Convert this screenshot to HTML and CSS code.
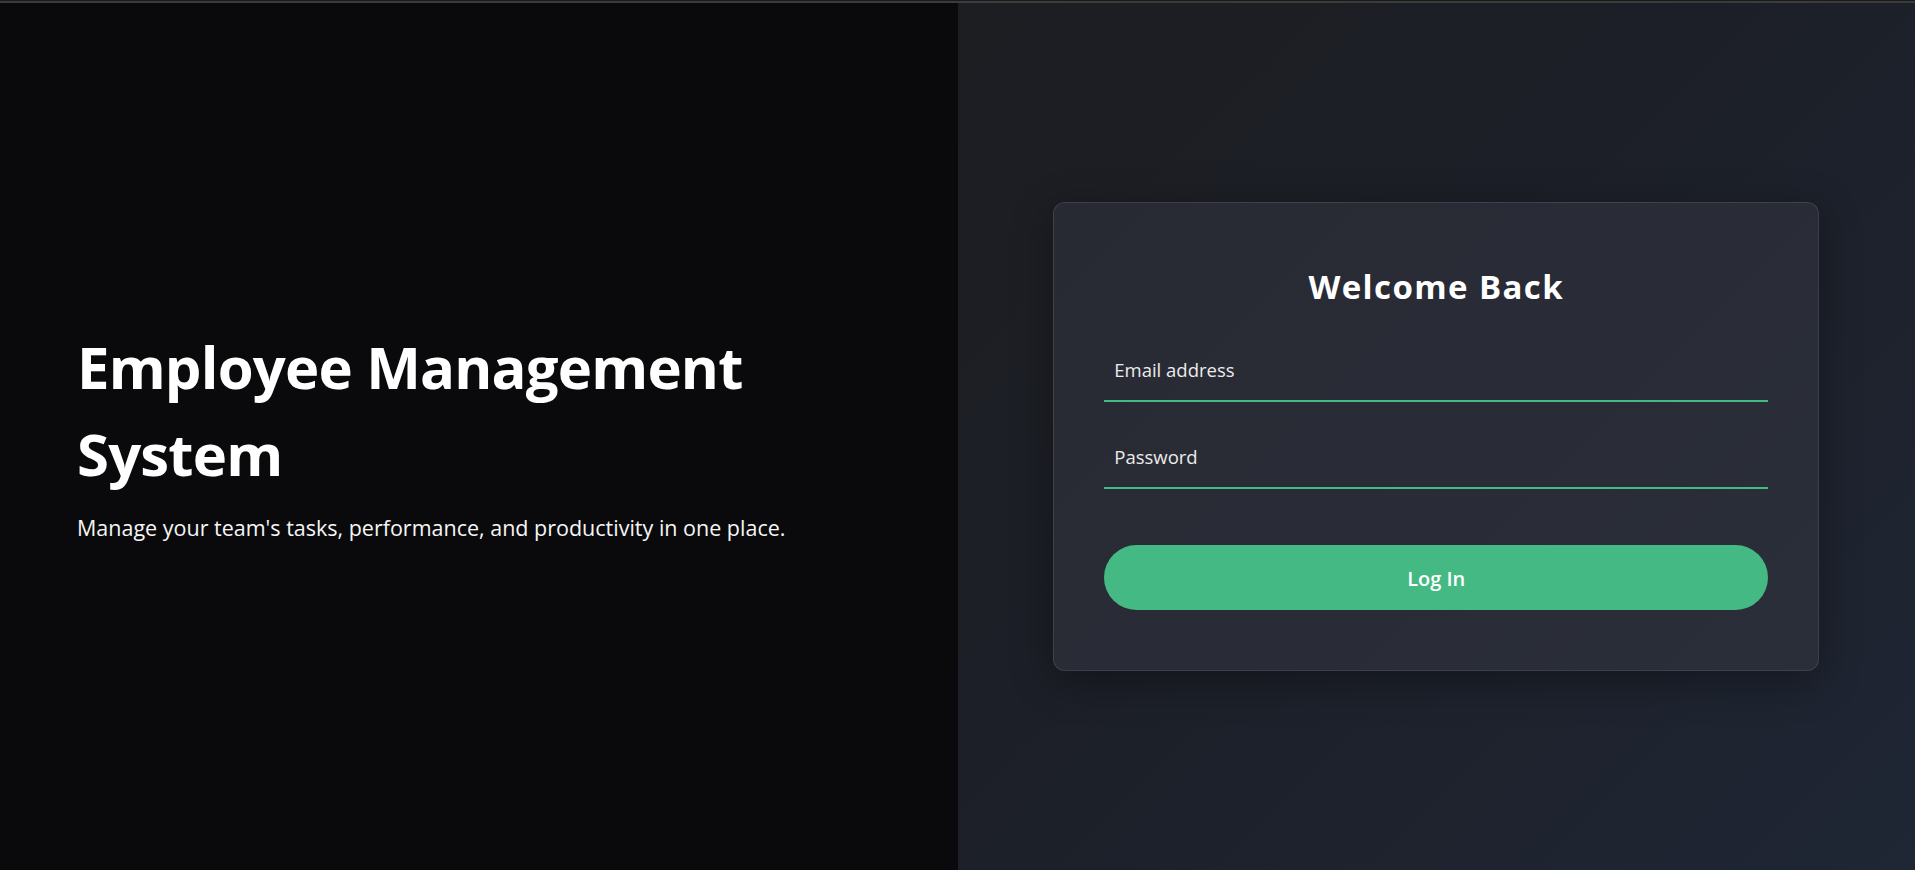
FILE: index.html
```html
<!DOCTYPE html>
<html lang="en">
<head>
<meta charset="utf-8">
<title>Employee Management System</title>
<link rel="stylesheet" href="styles.css">
</head>
<body>
<div class="page">
  <section class="intro">
    <h1 class="intro-title">Employee Management System</h1>
    <p class="intro-text">Manage your team's tasks, performance, and productivity in one place.</p>
  </section>
  <section class="auth">
    <form class="card">
      <h2 class="card-title">Welcome Back</h2>
      <input class="field field-first" type="email" placeholder="Email address">
      <input class="field" type="password" placeholder="Password">
      <button class="btn" type="button">Log In</button>
    </form>
  </section>
</div>
</body>
</html>
```

FILE: styles.css
```css
* { box-sizing: border-box; }
html, body { height: 100%; }
body {
  margin: 0;
  font-family: "Open Sans", "Noto Sans", sans-serif;
  color: #fff;
  background: #0a0a0c;
  border-top: 1px solid #1a1a1a;
  overflow: hidden;
}
.page {
  height: 100%;
  display: flex;
  border-top: 2px solid #3b3b3c;
}
.intro {
  flex: 1 1 50%;
  background: #0a0a0c;
  display: flex;
  flex-direction: column;
  justify-content: center;
  padding: 0 77px 5px;
}
.intro-title {
  margin: 0;
  font-size: 58px;
  line-height: 86.7px;
  font-weight: 700;
  letter-spacing: -0.8px;
  max-width: 720px;
}
.intro-text {
  margin: 15px 0 0;
  font-size: 21.5px;
  line-height: 31.5px;
  color: #f6f6f6;
}
.auth {
  flex: 1 1 50%;
  background: linear-gradient(135deg, #1d1e22 0%, #1c1f27 40%, #1f2634 100%);
  display: flex;
  align-items: center;
  justify-content: center;
}
.card {
  width: 80%;
  padding: 60px 50px;
  border: 1px solid rgba(255,255,255,0.1);
  border-radius: 12px;
  background: linear-gradient(135deg, #282a33 0%, #2a2e39 100%);
  box-shadow: 0 10px 40px rgba(0,0,0,0.35);
  display: flex;
  flex-direction: column;
}
.card-title {
  margin: 0 0 32px;
  padding-top: 3px;
  text-align: center;
  font-size: 33px;
  line-height: 42px;
  font-weight: 700;
  letter-spacing: 1.4px;
}
.field {
  display: block;
  width: 100%;
  margin: 0;
  padding: 17px 10px;
  font-family: inherit;
  font-size: 18.5px;
  line-height: 26px;
  color: #fff;
  background: transparent;
  border: none;
  border-bottom: 2px solid #45b983;
  border-radius: 0;
  outline: none;
}
.field::placeholder { color: #ececec; opacity: 1; }
.field-first { margin-bottom: 25px; }
.btn {
  margin-top: 56px;
  height: 65px;
  width: 100%;
  border: none;
  border-radius: 33px;
  background: #45b983;
  color: #fff;
  font-family: inherit;
  font-size: 20px;
  font-weight: 600;
  padding: 2px 0 0;
}
```
